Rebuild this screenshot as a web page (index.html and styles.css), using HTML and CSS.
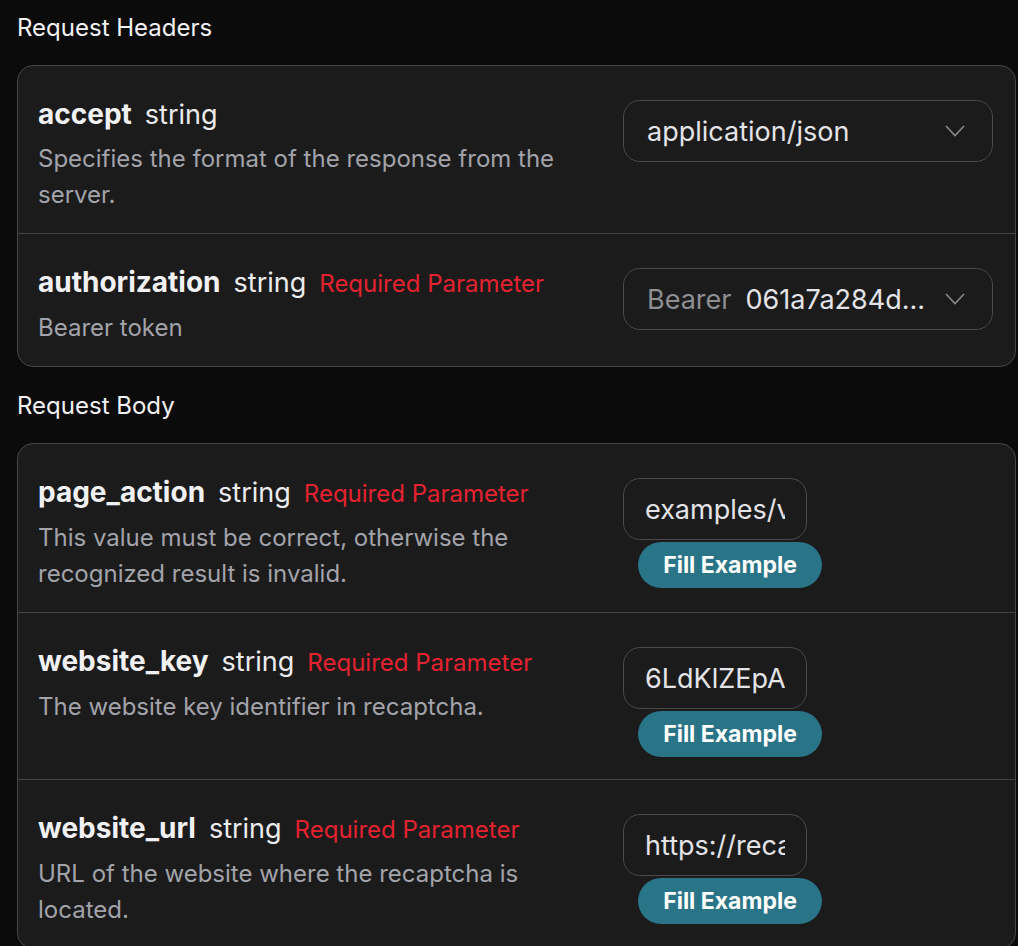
FILE: index.html
```html
<!DOCTYPE html>
<html lang="en">
<head>
    <meta charset="UTF-8">
    <meta name="viewport" content="width=device-width, initial-scale=1.0">
    <title>Request Parameters</title>
    <link rel="stylesheet" href="styles.css">
</head>
<body>
    <h3 class="section-title">Request Headers</h3>
    <div class="param-card">
        <div class="param-row">
            <div class="param-info">
                <div class="param-head">
                    <span class="param-name">accept</span>
                    <span class="param-type">string</span>
                </div>
                <p class="param-desc">Specifies the format of the response from the server.</p>
            </div>
            <div class="param-field">
                <div class="select">
                    <span class="select-value">application/json</span>
                    <svg class="chevron" width="20" height="12" viewBox="0 0 20 12"><path d="M1 1l9 9.5L19 1" fill="none" stroke="#8a8a8e" stroke-width="1.6"/></svg>
                </div>
            </div>
        </div>
        <div class="param-row">
            <div class="param-info">
                <div class="param-head">
                    <span class="param-name">authorization</span>
                    <span class="param-type">string</span>
                    <span class="param-required">Required Parameter</span>
                </div>
                <p class="param-desc">Bearer token</p>
            </div>
            <div class="param-field">
                <div class="select">
                    <span class="select-value"><span class="prefix">Bearer</span>061a7a284d...</span>
                    <svg class="chevron" width="20" height="12" viewBox="0 0 20 12"><path d="M1 1l9 9.5L19 1" fill="none" stroke="#8a8a8e" stroke-width="1.6"/></svg>
                </div>
            </div>
        </div>
    </div>

    <h3 class="section-title">Request Body</h3>
    <div class="param-card">
        <div class="param-row">
            <div class="param-info">
                <div class="param-head">
                    <span class="param-name">page_action</span>
                    <span class="param-type">string</span>
                    <span class="param-required">Required Parameter</span>
                </div>
                <p class="param-desc">This value must be correct, otherwise the recognized result is invalid.</p>
            </div>
            <div class="param-field">
                <input class="text-input" type="text" value="examples/v1/recaptcha_v3">
                <button class="fill-btn">Fill Example</button>
            </div>
        </div>
        <div class="param-row">
            <div class="param-info">
                <div class="param-head">
                    <span class="param-name">website_key</span>
                    <span class="param-type">string</span>
                    <span class="param-required">Required Parameter</span>
                </div>
                <p class="param-desc">The website key identifier in recaptcha.</p>
            </div>
            <div class="param-field">
                <input class="text-input" type="text" value="6LdKlZEpAAAAAAOQjzC2v_d36tWxCl6dWsozdSy9">
                <button class="fill-btn">Fill Example</button>
            </div>
        </div>
        <div class="param-row">
            <div class="param-info">
                <div class="param-head">
                    <span class="param-name">website_url</span>
                    <span class="param-type">string</span>
                    <span class="param-required">Required Parameter</span>
                </div>
                <p class="param-desc">URL of the website where the recaptcha is located.</p>
            </div>
            <div class="param-field">
                <input class="text-input" type="text" value="https://recaptcha-demo.appspot.com/">
                <button class="fill-btn">Fill Example</button>
            </div>
        </div>
    </div>
</body>
</html>
```

FILE: styles.css
```css
body {
    margin: 0;
    padding: 0 2px 0 17px;
    background-color: #0b0b0b;
    color: #ececee;
    font-family: Inter, "Noto Sans", sans-serif;
}
.section-title {
    margin: 0;
    padding: 13px 0 22px;
    font-size: 24px;
    line-height: 30px;
    font-weight: 400;
    color: #f2f2f4;
}
.param-card {
    margin-bottom: 11px;
    background-color: #1b1b1c;
    border: 1.5px solid #474749;
    border-radius: 16px;
}
.param-row {
    display: grid;
    grid-template-columns: 1fr 370px;
    gap: 50px;
    padding: 32px 22px 20px 20px;
}
.param-row + .param-row {
    border-top: 1.5px solid #444446;
}
.param-head {
    display: flex;
    align-items: baseline;
    gap: 13px;
    line-height: 32px;
    white-space: nowrap;
}
.param-name {
    font-size: 28px;
    font-weight: 700;
    color: #f1f1f3;
}
.param-type {
    font-size: 27px;
    color: #ececee;
}
.param-required {
    font-size: 24px;
    color: #e5222f;
}
.param-desc {
    margin: 10px 0 0;
    font-size: 24px;
    line-height: 36px;
    color: #a3a3aa;
}
.param-field {
    margin: 2px 0;
}
.select {
    display: flex;
    align-items: center;
    justify-content: space-between;
    height: 62px;
    box-sizing: border-box;
    padding: 0 27px 0 23px;
    border: 1.5px solid #4a4a4c;
    border-radius: 17px;
    font-size: 27px;
    color: #e4e4e8;
}
.prefix {
    color: #8e8e93;
    margin-right: 14px;
}
.text-input {
    display: block;
    width: 184px;
    height: 62px;
    box-sizing: border-box;
    padding: 0 21px;
    background: transparent;
    border: 1.5px solid #4a4a4c;
    border-radius: 17px;
    font-family: inherit;
    font-size: 27px;
    color: #e4e4e8;
    outline: none;
}
.fill-btn {
    display: block;
    margin: 2px 0 0 15px;
    width: 184px;
    height: 46px;
    border: none;
    border-radius: 23px;
    background-color: #297487;
    color: #fff;
    font-family: inherit;
    font-size: 23px;
    font-weight: 700;
    cursor: pointer;
}
```
